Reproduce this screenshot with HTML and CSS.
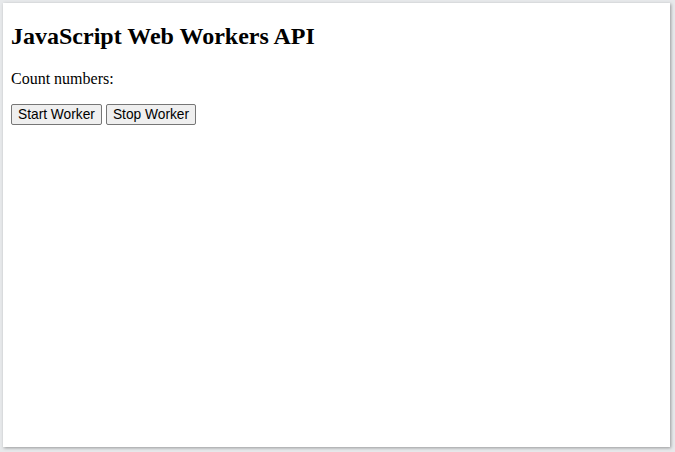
FILE: index.html
```html
<!DOCTYPE html>
<html lang="en">
<head>
    <meta charset="UTF-8">
    <meta name="viewport" content="width=device-width, initial-scale=1.0">
    <title>JavaScript Web Workers API</title>
    <link rel="stylesheet" href="styles.css">
</head>
<body>
    <div class="frame">
        <h2>JavaScript Web Workers API</h2>
        <p>Count numbers: <output id="result"></output></p>
        <button onclick="startWorker()">Start Worker</button>
        <button onclick="stopWorker()">Stop Worker</button>
    </div>

    <script>
        var i = 0;
        var timer;
        function startWorker(){
            if (timer) return;
            timer = setInterval(function(){
                i = i + 1;
                document.getElementById('result').innerHTML = i;
            }, 500);
        }
        function stopWorker(){
            clearInterval(timer);
            timer = undefined;
        }
    </script>
</body>
</html>
```

FILE: styles.css
```css
html, body{
    margin: 0;
    height: 100%;
}
body{
    background-color: #e7e9eb;
    padding: 3px 5px 5px 3px;
    box-sizing: border-box;
}
.frame{
    height: 100%;
    box-sizing: border-box;
    background-color: white;
    padding: 8px;
    box-shadow: 1px 1px 3px rgba(0, 0, 0, 0.35);
    font-family: "Liberation Serif", "Times New Roman", serif;
    color: black;
}
h2{
    font-size: 24px;
    margin: 12px 0 20px;
}
p{
    font-size: 16px;
    margin: 16px 0;
}
button{
    font-family: "Liberation Sans", Arial, sans-serif;
    font-size: 13.75px;
    padding: 2px 6px;
    background-color: #efefef;
    border: 1px solid #767676;
    border-radius: 2px;
    color: black;
}
```
